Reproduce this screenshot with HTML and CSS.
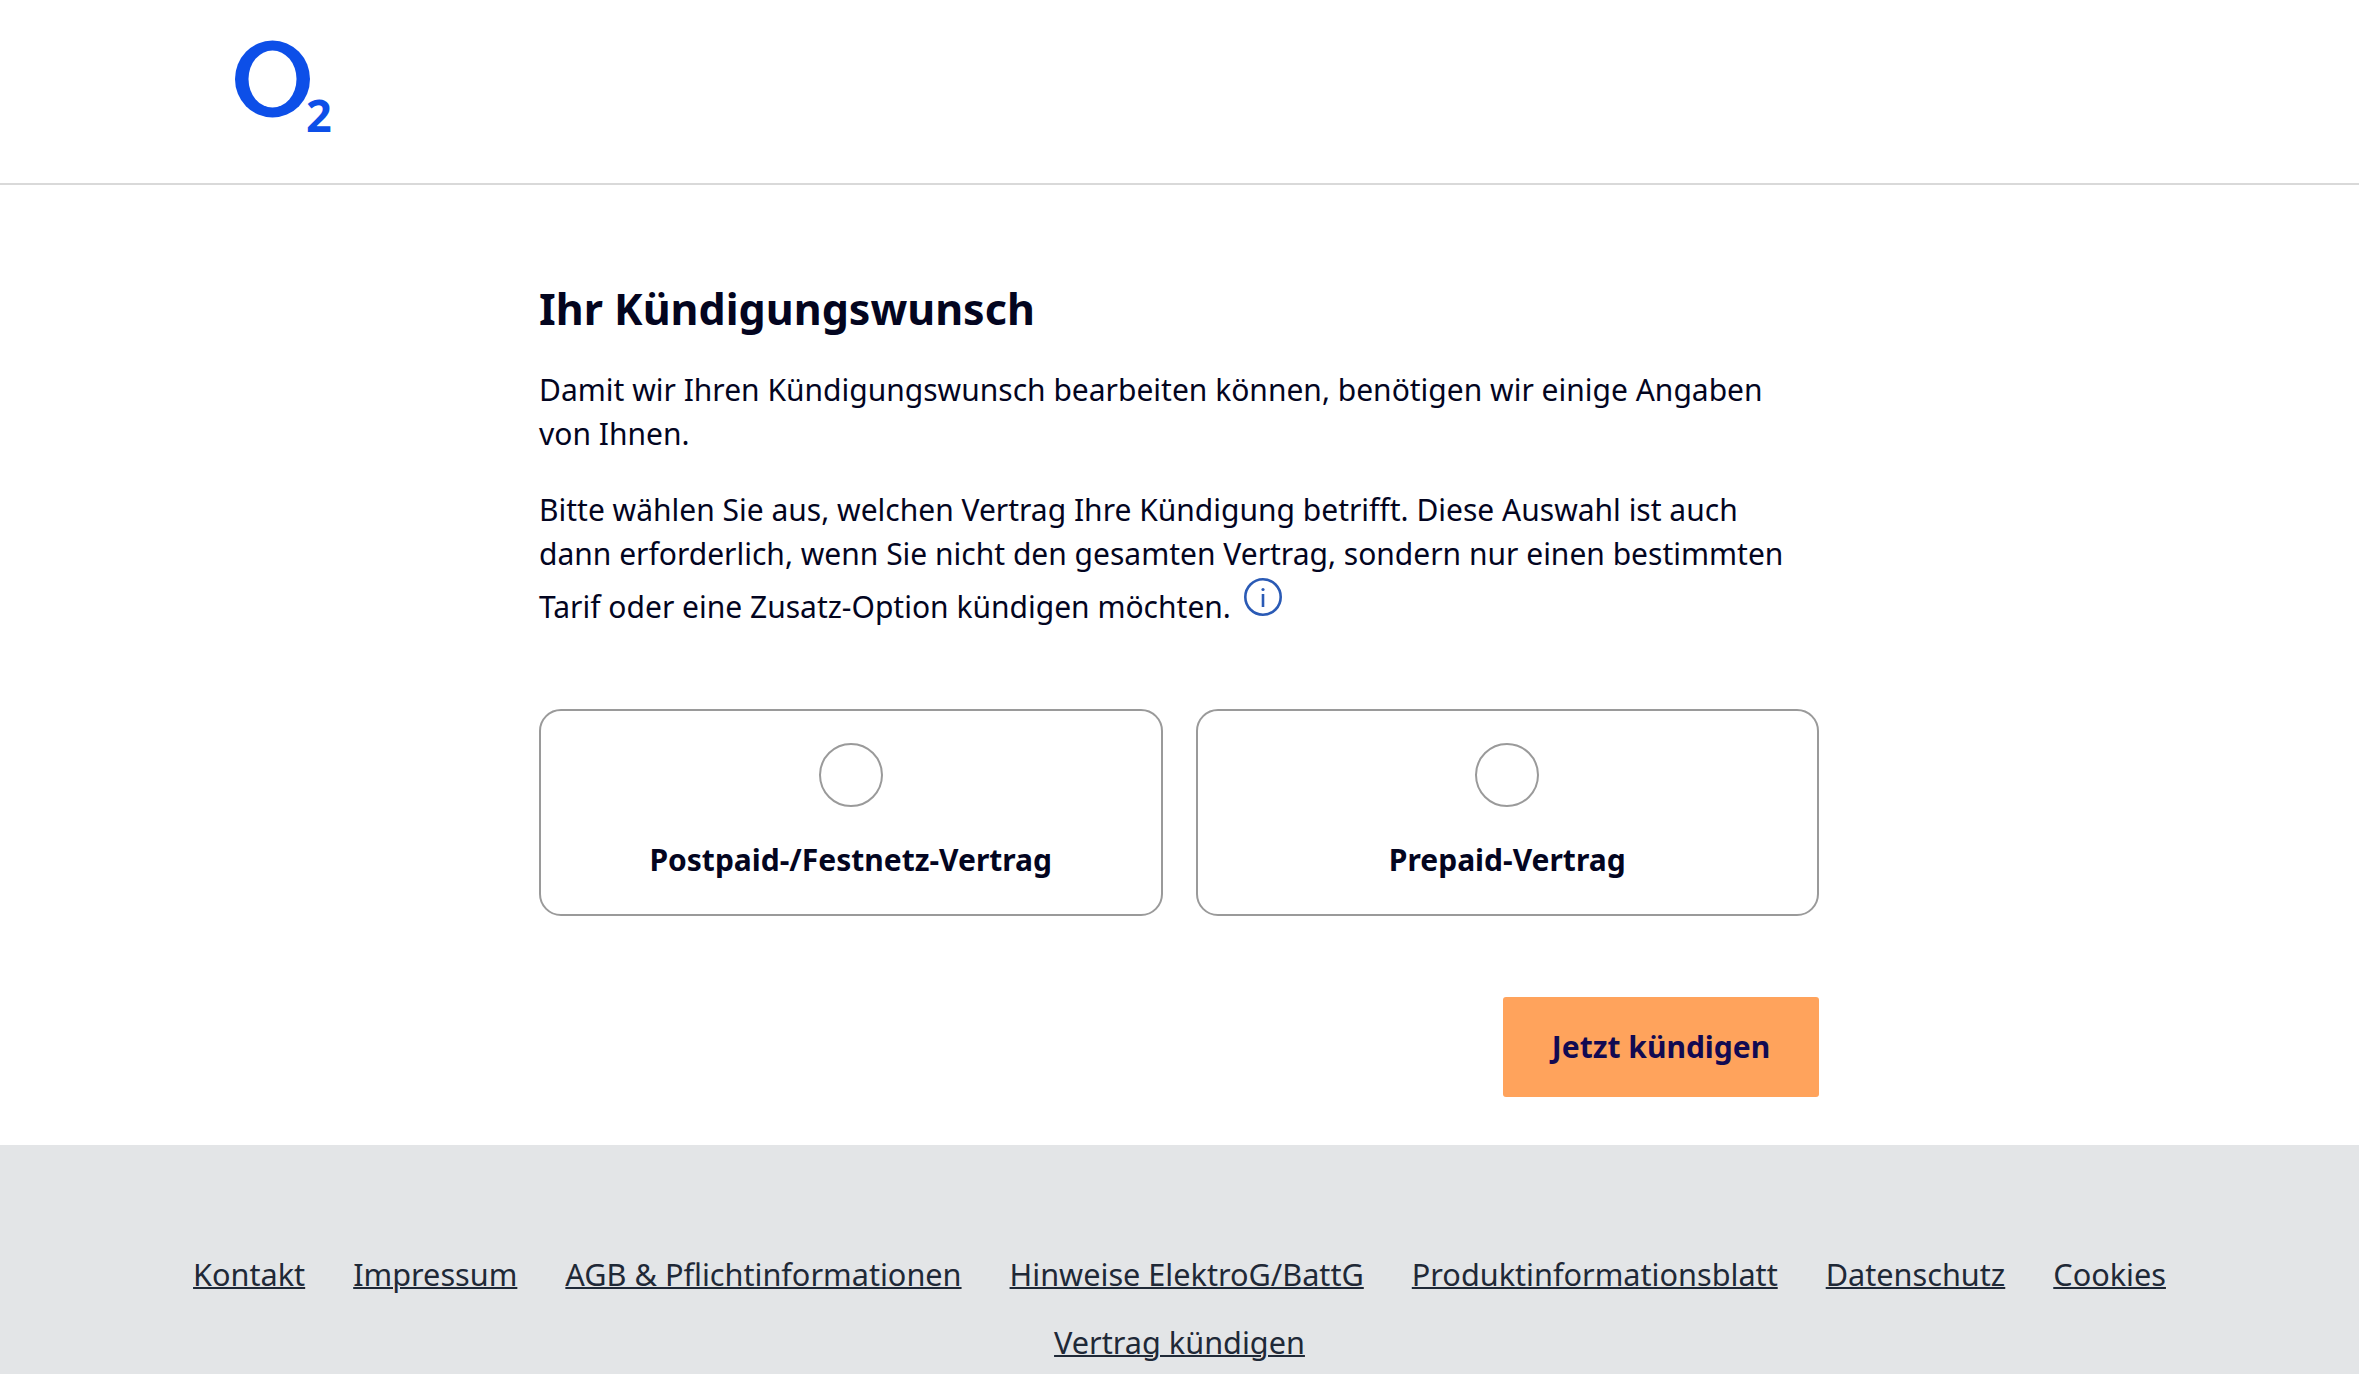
FILE: index.html
```html
<!DOCTYPE html>
<html lang="de">
<head>
<meta charset="utf-8">
<title>Ihr Kündigungswunsch</title>
<link rel="stylesheet" href="styles.css">
</head>
<body>
<header class="site-header">
  <svg class="logo" width="120" height="110" viewBox="0 0 120 110" role="img" aria-label="O2">
    <ellipse cx="37.5" cy="39" rx="37.5" ry="38.5" fill="#0d4fe8"/>
    <ellipse cx="37.5" cy="39" rx="24" ry="28.5" fill="#fff"/>
    <text class="logo-sub" x="71" y="92">2</text>
  </svg>
</header>
<main class="content">
  <h1 class="title">Ihr Kündigungswunsch</h1>
  <p class="copy">Damit wir Ihren Kündigungswunsch bearbeiten können, benötigen wir einige Angaben von Ihnen.</p>
  <p class="copy copy-second">Bitte wählen Sie aus, welchen Vertrag Ihre Kündigung betrifft. Diese Auswahl ist auch dann erforderlich, wenn Sie nicht den gesamten Vertrag, sondern nur einen bestimmten Tarif oder eine Zusatz-Option kündigen möchten. <svg class="info" width="38" height="38" viewBox="0 0 38 38"><circle cx="19" cy="19" r="17.7" fill="none" stroke="#2a5ab5" stroke-width="2.6"/><path d="M19 16v13" stroke="#2a5ab5" stroke-width="2.6"/><circle cx="19" cy="11.5" r="1.6" fill="#2a5ab5"/></svg></p>
  <div class="options">
    <label class="option"><span class="radio"></span><span class="option-label">Postpaid-/Festnetz-Vertrag</span></label>
    <label class="option"><span class="radio"></span><span class="option-label">Prepaid-Vertrag</span></label>
  </div>
  <div class="actions"><button class="submit" type="button">Jetzt kündigen</button></div>
</main>
<footer class="site-footer">
  <nav class="footer-links">
    <a href="#">Kontakt</a>
    <a href="#">Impressum</a>
    <a href="#">AGB &amp; Pflichtinformationen</a>
    <a href="#">Hinweise ElektroG/BattG</a>
    <a href="#">Produktinformationsblatt</a>
    <a href="#">Datenschutz</a>
    <a href="#">Cookies</a>
    <a href="#">Vertrag kündigen</a>
  </nav>
</footer>
</body>
</html>
```
FILE: styles.css
```css
* { box-sizing: border-box; }
html, body { margin: 0; padding: 0; }
body {
  height: 1374px;
  overflow: hidden;
  background: #fff;
  color: #03051f;
  font-family: "Noto Sans", sans-serif;
}
.site-header {
  height: 185px;
  border-bottom: 2px solid #d9d9d9;
  padding: 40px 0 0 235px;
}
.logo { display: block; }
.logo-sub { font: 700 45px "Noto Sans", sans-serif; fill: #0d4fe8; }
.content {
  width: 1280px;
  height: 960px;
  margin: 0 0 0 539px;
  padding-top: 96px;
}
.title {
  margin: 0;
  font-size: 43px;
  line-height: 56px;
  font-weight: 700;
}
.copy {
  margin: 31px 0 0;
  max-width: 1260px;
  font-size: 30px;
  line-height: 44px;
  font-weight: 400;
}
.copy-second { margin-top: 32px; }
.info { vertical-align: 4px; margin-left: 5px; position: relative; top: 2px; }
.options {
  display: flex;
  gap: 33px;
  margin-top: 80px;
}
.option {
  flex: 1;
  height: 207px;
  border: 2px solid #9a9a9a;
  border-radius: 22px;
  display: flex;
  flex-direction: column;
  align-items: center;
  padding-top: 32px;
}
.radio {
  width: 64px;
  height: 64px;
  border: 2px solid #9a9a9a;
  border-radius: 50%;
}
.option-label {
  margin-top: 31px;
  font-size: 30px;
  line-height: 44px;
  font-weight: 700;
}
.actions {
  display: flex;
  justify-content: flex-end;
  margin-top: 81px;
}
.submit {
  width: 316px;
  height: 100px;
  border: 0;
  border-radius: 3px;
  padding: 0 0 2px;
  background: #ffa35c;
  color: #120a52;
  font: 700 30px "Noto Sans", sans-serif;
}
.site-footer {
  height: 229px;
  background: #e3e5e7;
  padding-top: 107px;
}
.footer-links {
  display: flex;
  flex-wrap: wrap;
  justify-content: center;
  gap: 24px 48px;
  width: 2100px;
  margin: 0 auto;
  font-size: 30.65px;
  line-height: 44px;
}
.footer-links a { color: #1f2937; text-decoration: underline; text-decoration-thickness: 2px; }
```
